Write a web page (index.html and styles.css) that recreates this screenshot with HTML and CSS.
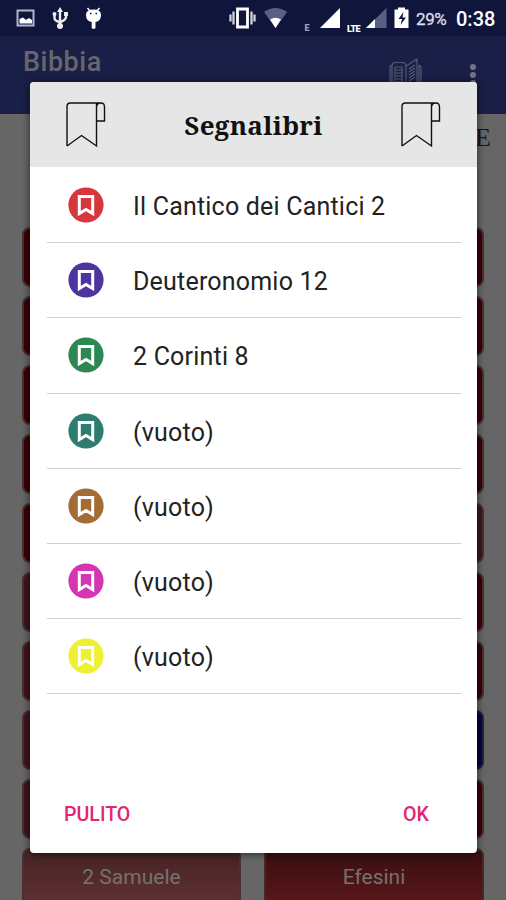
FILE: index.html
```html
<!DOCTYPE html>
<html lang="it">
<head>
<meta charset="utf-8">
<title>Bibbia</title>
<link rel="stylesheet" href="styles.css">
</head>
<body>
<svg width="0" height="0" class="defs">
  <symbol id="ribbon" viewBox="0 0 42 48">
    <path d="M2 45V5.500Q2 2 5.500 2H36Q39.500 2 39.500 6V20H31.500M31.500 2.500V45L16.500 34.500L2 45M31.500 6Q32 2 35.500 2" fill="none" stroke="#111" stroke-width="1.400"/>
  </symbol>
  <symbol id="mark" viewBox="0 0 36 36">
    <circle cx="18" cy="18" r="17.600" fill="currentColor"/>
    <path d="M11.300 9.500H24.700V26.500L18 22.500L11.300 26.500Z" fill="none" stroke="#fff" stroke-width="3"/>
  </symbol>
</svg>
<div class="screen">
  <header class="status">
    <svg class="left-icons" width="120" height="36" viewBox="0 0 120 36">
      <path d="M17.500 10.500H33.500V25.500H17.500Z" fill="none" stroke="#b2b5ca" stroke-width="2"/>
      <path d="M19.500 23.500V19L23 17.500L26 20L29 18L32 20V23.500Z" fill="#fff"/>
      <g stroke="#eee" stroke-width="2.400" fill="none"><path d="M60 10V26M54.500 15V18Q54.500 21 60 22Q66 20 66 17V14"/></g>
      <path d="M60 7L63 12H57ZM64 12H68V16H64Z" fill="#eee"/><circle cx="54.500" cy="14" r="2" fill="#eee"/><circle cx="60" cy="26" r="3" fill="#eee"/>
      <path d="M86 15Q86 9.500 93.500 9.500T101 15Q101 21 95.500 22V28Q93.500 30 91.700 28V22Q86 21 86 15Z" fill="#fff"/>
      <path d="M87.500 8L90 11M99.500 8L97 11" stroke="#fff" stroke-width="1.500"/><path d="M90 13.500h1.500M95.500 13.500H97" stroke="#141a42" stroke-width="1.500"/>
    </svg>
    <svg class="right-icons" width="185" height="36" viewBox="0 0 185 36">
      <path d="M8.500 9H18.500V27H8.500Z" fill="none" stroke="#fff" stroke-width="2.800"/>
      <path d="M4.500 11.500V24.500M22.500 11.500V24.500M1.500 14.500V21.500M25.500 14.500V21.500" stroke="#d2d3dc" stroke-width="2.300"/>
      <path d="M35 12Q46.500 4 58 12L46.500 28Z" fill="#596086"/><path d="M41 19.500Q46.500 16 52 19.500L46.500 28Z" fill="#fff"/>
      <text x="75.500" y="31" class="net dim">E</text>
      <path d="M91 28L111 8V28Z" fill="#fff"/>
      <text x="118" y="32" class="net">LTE</text>
      <path d="M137 28L157.500 8V28Z" fill="#596086"/><path d="M137 28L146 19V28Z" fill="#fff"/>
      <path d="M165.500 9.500H169V7.500H176V9.500H179.500V28H165.500Z" fill="#fff"/>
      <path d="M174.500 12L169.500 19H173L171.500 25L177 17.500H173.500Z" fill="#111740"/>
    </svg>
    <span class="battery">29%</span>
    <span class="clock">0:38</span>
  </header>
  <div class="appbar">
    <span class="brand">Bibbia</span>
    <svg class="book" width="36" height="36" viewBox="0 0 36 36" fill="none" stroke="#555a72" stroke-width="1.200">
      <path d="M4 30V8Q4 5 7 4.500H15Q18 5 18 9V30M2 30V9Q2 7 4 7M18 8L29 1V30M31 30V7M33 30V9L31 7M7 9h7V30M7 9V30M8 12h6M8 15h6M8 18h6M8 21h6M8 24h6M21 11L27 7M21 14L27 10M21 17L27 13M21 20L27 16M21 23L27 19"/>
    </svg>
    <svg class="more" width="8" height="26" viewBox="0 0 8 26" fill="#747481"><circle cx="4" cy="4" r="3"/><circle cx="4" cy="12" r="3"/><circle cx="4" cy="20" r="3"/></svg>
  </div>
  <div class="testament">E</div>
  <main class="books">
    <i class="book-btn deep"></i><i class="book-btn deep"></i>
    <i class="book-btn deep"></i><i class="book-btn deep"></i>
    <i class="book-btn deep"></i><i class="book-btn deep"></i>
    <i class="book-btn deep"></i><i class="book-btn deep"></i>
    <i class="book-btn deep"></i><i class="book-btn soft"></i>
    <i class="book-btn soft"></i><i class="book-btn deep"></i>
    <i class="book-btn soft"></i><i class="book-btn deep"></i>
    <i class="book-btn soft"></i><i class="book-btn blue"></i>
    <i class="book-btn soft"></i><i class="book-btn deep"></i>
    <div class="book-btn history">2 Samuele</div><div class="book-btn letters">Efesini</div>
  </main>
  <section class="dialog">
    <div class="dialog-head">
      <svg width="42" height="48"><use href="#ribbon"/></svg>
      <h1>Segnalibri</h1>
      <svg width="42" height="48"><use href="#ribbon"/></svg>
    </div>
    <ul>
      <li><svg class="dot red"><use href="#mark"/></svg><span>Il Cantico dei Cantici 2</span></li>
      <li><svg class="dot violet"><use href="#mark"/></svg><span>Deuteronomio 12</span></li>
      <li><svg class="dot green"><use href="#mark"/></svg><span>2 Corinti 8</span></li>
      <li><svg class="dot teal"><use href="#mark"/></svg><span>(vuoto)</span></li>
      <li><svg class="dot brown"><use href="#mark"/></svg><span>(vuoto)</span></li>
      <li><svg class="dot pink"><use href="#mark"/></svg><span>(vuoto)</span></li>
      <li><svg class="dot yellow"><use href="#mark"/></svg><span>(vuoto)</span></li>
    </ul>
    <div class="actions"><span>PULITO</span><span>OK</span></div>
  </section>
</div>
</body>
</html>
```

FILE: styles.css
```css
* { box-sizing: border-box; }
body { margin: 0; font-family: Roboto, sans-serif; }
.defs { position: absolute; }
svg { display: block; flex: none; }
.screen { position: relative; width: 506px; height: 900px; overflow: hidden; background: #666; }
.status { height: 36px; background: #10153c; display: flex; align-items: center; color: #fff; }
.right-icons { margin-left: 109px; }
.battery { width: 39px; margin-left: 2px; font-size: 17px; letter-spacing: -.4px; color: #dcdde5; -webkit-text-stroke: .3px #dcdde5; padding-top: 1px; }
.clock { font-size: 20px; font-weight: 500; margin-left: 1px; padding-top: 2px; white-space: nowrap; }
.net { font-size: 9px; font-weight: 900; fill: #fff; letter-spacing: -.6px; }
.dim { fill: #a0a3b5; }
.appbar { height: 78px; background: #191f47; display: flex; align-items: flex-start; }
.brand { width: 364px; padding: 9px 0 0 23px; font-size: 27px; letter-spacing: .5px; line-height: 34px; font-weight: 500; color: #66666c; }
.book { margin: 22px 0 0 24px; }
.more { margin: 27px 0 0 45px; }
.testament { height: 113px; padding: 9px 15px 0; text-align: right; font: 26px/30px "Liberation Serif", serif; color: #171717; }
.books { display: grid; grid-template-columns: 219px 220px; column-gap: 23px; grid-auto-rows: 60px; row-gap: 9px; padding-left: 22px; }
.book-btn { border: 2px solid #443231; border-radius: 8px; display: flex; justify-content: center; align-items: center; font-size: 21.5px; padding-bottom: 2px; color: #777170; }
.deep { background: #3b0005; }
.soft { background: #40151b; }
.blue { background: #05063f; border-color: #22223d; }
.history { background: linear-gradient(#452324, #603133); border-color: #4a3030; font-size: 21px; }
.letters { background: linear-gradient(#380e10, #5c181b); border-color: #462829; font-size: 21px; }
.dialog { position: absolute; left: 30px; top: 82px; width: 447px; height: 771px; background: #fff; border-radius: 4px; overflow: hidden; box-shadow: 0 1px 9px #0009; }
.dialog-head { height: 85px; background: #e6e6e6; display: flex; justify-content: space-between; align-items: center; padding: 1px 35px 0 35px; }
h1 { margin: 0; font: 700 26px/34px "Noto Serif", "Droid Serif", "DejaVu Serif", serif; font-stretch: condensed; letter-spacing: .3px; color: #111; white-space: nowrap; }
ul { list-style: none; margin: 0; padding: 1px 16px 0 17px; }
li { height: 75.2px; border-bottom: 1.5px solid #d0d0d0; display: flex; align-items: center; font-size: 25px; letter-spacing: .2px; color: #222; }
.dot { width: 36px; height: 36px; margin: 0 29.5px 0 20.5px; }
li span { padding-top: 3px; white-space: nowrap; }
.red { color: #d8363d; }
.violet { color: #4d35a0; }
.green { color: #2d8753; }
.teal { color: #2e7c70; }
.brown { color: #a36c34; }
.pink { color: #d534b2; }
.yellow { color: #eff033; }
.actions { display: flex; justify-content: space-between; padding: 108px 48px 0 34px; font-size: 19.6px; line-height: 26px; font-weight: 500; color: #e22674; }
```
